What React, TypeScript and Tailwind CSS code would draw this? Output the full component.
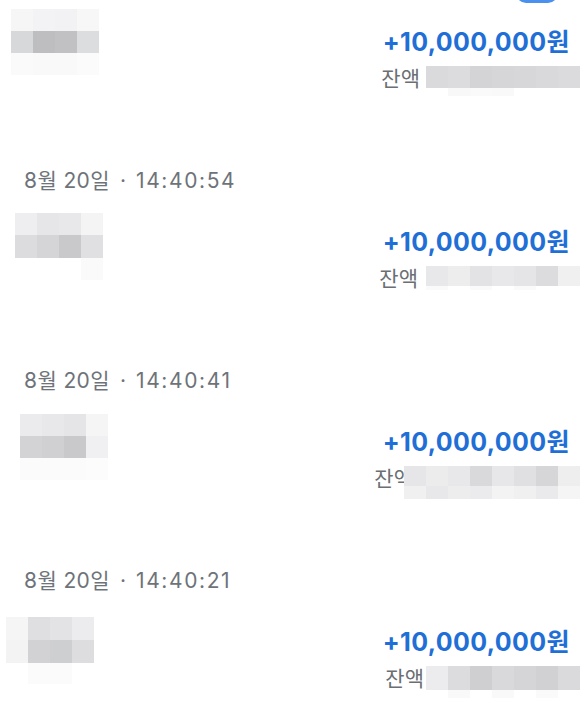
import React from "react";

type Row = { h: string; cells: string[] };

type Tx = {
  day: string;
  time: string;
  nameBox: string;
  name: Row[];
  balGap: string;
  bal: Row[];
};

const TXS: Tx[] = [
  {
    // date row of this one sits above the visible area
    day: "",
    time: "",
    nameBox: "mt-[14px] ml-[11px]",
    name: [
      { h: "h-[22px]", cells: ["bg-[#f6f6f7]", "bg-[#f3f3f5]", "bg-[#f2f2f4]", "bg-[#f7f7f8]"] },
      { h: "h-[22px]", cells: ["bg-[#d7d8da]", "bg-[#bebec0]", "bg-[#c1c1c3]", "bg-[#dcdddf]"] },
      { h: "h-[22px]", cells: ["bg-[#fafafa]", "bg-[#f9f9fa]", "bg-[#f9f9fa]", "bg-[#fbfbfb]"] },
    ],
    balGap: "ml-[6px]",
    bal: [
      { h: "h-[22px]", cells: ["bg-[#dadadc]", "bg-[#dcdcde]", "bg-[#d4d4d6]", "bg-[#d6d6d8]", "bg-[#d7d7d9]", "bg-[#d9d9db]", "bg-[#dbdbdd]"] },
      { h: "h-[8px]", cells: ["bg-white", "bg-[#f8f8f9]", "bg-[#fafafa]", "bg-[#f9f9fa]", "bg-white", "bg-white", "bg-white"] },
    ],
  },
  {
    day: "8월 20일",
    time: "14:40:54",
    nameBox: "mt-[18px] ml-[15px]",
    name: [
      { h: "h-[22px]", cells: ["bg-[#eeeef0]", "bg-[#e6e6e8]", "bg-[#e8e8ea]", "bg-[#f4f4f5]"] },
      { h: "h-[23px]", cells: ["bg-[#dcdcde]", "bg-[#d5d5d7]", "bg-[#c9c9cb]", "bg-[#e0e0e2]"] },
      { h: "h-[22px]", cells: ["bg-white", "bg-white", "bg-white", "bg-[#fafafb]"] },
    ],
    balGap: "ml-[8px]",
    bal: [
      { h: "h-[20px]", cells: ["bg-[#e8e8ea]", "bg-[#ededee]", "bg-[#e3e3e5]", "bg-[#e8e8ea]", "bg-[#e5e5e7]", "bg-[#dcdcde]", "bg-[#f0f0f1]"] },
      { h: "h-[4px]", cells: ["bg-[#fafafa]", "bg-white", "bg-[#fafafa]", "bg-white", "bg-[#fafafa]", "bg-white", "bg-white"] },
    ],
  },
  {
    day: "8월 20일",
    time: "14:40:41",
    nameBox: "mt-[19px] ml-[20px]",
    name: [
      { h: "h-[22px]", cells: ["bg-[#ebebed]", "bg-[#e8e8ea]", "bg-[#e5e5e7]", "bg-[#f5f5f6]"] },
      { h: "h-[22px]", cells: ["bg-[#d3d3d5]", "bg-[#d0d0d2]", "bg-[#c9c9cb]", "bg-[#f0f0f2]"] },
      { h: "h-[22px]", cells: ["bg-[#fbfbfb]", "bg-[#fbfbfb]", "bg-[#fbfbfb]", "bg-[#fcfcfc]"] },
    ],
    balGap: "-ml-[9px]",
    bal: [
      { h: "h-[20px]", cells: ["bg-[#e6e6e8]", "bg-[#ececed]", "bg-[#e8e8ea]", "bg-[#d9d9db]", "bg-[#e7e7e9]", "bg-[#e0e0e2]", "bg-[#d6d6d8]", "bg-[#eeeeef]"] },
      { h: "h-[13px]", cells: ["bg-[#f0f0f1]", "bg-[#e8e8ea]", "bg-[#ededee]", "bg-[#ebebed]", "bg-[#f3f3f4]", "bg-[#f0f0f1]", "bg-[#eaeaec]", "bg-[#f5f5f6]"] },
    ],
  },
  {
    day: "8월 20일",
    time: "14:40:21",
    nameBox: "mt-[22px] ml-[6px]",
    name: [
      { h: "h-[23px]", cells: ["bg-[#f5f5f6]", "bg-[#dfdfe1]", "bg-[#e3e3e5]", "bg-[#ececee]"] },
      { h: "h-[23px]", cells: ["bg-[#f3f3f4]", "bg-[#d2d2d4]", "bg-[#cecfd1]", "bg-[#dddddf]"] },
      { h: "h-[21px]", cells: ["bg-white", "bg-[#fbfbfb]", "bg-[#fbfbfb]", "bg-white"] },
    ],
    balGap: "ml-[2px]",
    bal: [
      { h: "h-[24px]", cells: ["bg-[#ececee]", "bg-[#dcdcde]", "bg-[#cfcfd1]", "bg-[#d9d9db]", "bg-[#d5d5d7]", "bg-[#d1d1d3]", "bg-[#dadadc]"] },
      { h: "h-[8px]", cells: ["bg-white", "bg-[#f9f9fa]", "bg-white", "bg-[#f9f9fa]", "bg-white", "bg-[#fafafa]", "bg-white"] },
    ],
  },
];

function Mosaic({ rows, cell }: { rows: Row[]; cell: string }) {
  return (
    <div className="flex flex-col">
      {rows.map((r, i) => (
        <div key={i} className={`flex ${r.h}`}>
          {r.cells.map((c, j) => (
            <div key={j} className={`${cell} h-full ${c}`} />
          ))}
        </div>
      ))}
    </div>
  );
}

export default function App() {
  return (
    <div
      className="relative w-full h-[704px] overflow-hidden bg-white"
      style={{ fontFamily: 'Inter, "Noto Sans CJK KR", sans-serif' }}
    >
      {/* bottom edge of the button above, cut off */}
      <div className="absolute -top-[31px] left-[516px] w-[42px] h-[34px] rounded-[10px] bg-[#4a90ee]" />

      <div className="-mt-[33px]">
        {TXS.map((tx, i) => (
          <div key={i} className="h-[200px]">
            <div className="h-[28px] pl-[24px] text-[21px] leading-[28px] text-[#6e737a] flex items-center">
              {tx.day && (
                <>
                  <span className="tracking-[0.4px]">{tx.day}</span>
                  <span className="mx-[10px]">·</span>
                  <span className="tracking-[1.6px]">{tx.time}</span>
                </>
              )}
            </div>
            <div className="flex justify-between items-start">
              <div className={tx.nameBox}>
                <Mosaic rows={tx.name} cell="w-[22px]" />
              </div>
              <div className="mt-[31px] pr-[17px] flex flex-col items-end">
                <div className="text-[25px] font-bold leading-[32px] tracking-[0.4px] text-[#1f6fd6]">
                  +10,000,000원
                </div>
                <div className="mt-[7px] -mr-[10px] flex items-start h-[28px]">
                  <span className="text-[21px] leading-[28px] text-[#6b6e73]">잔액</span>
                  <div className={`${tx.balGap} mt-[1px]`}>
                    <Mosaic rows={tx.bal} cell="w-[22px]" />
                  </div>
                </div>
              </div>
            </div>
          </div>
        ))}
      </div>
    </div>
  );
}
